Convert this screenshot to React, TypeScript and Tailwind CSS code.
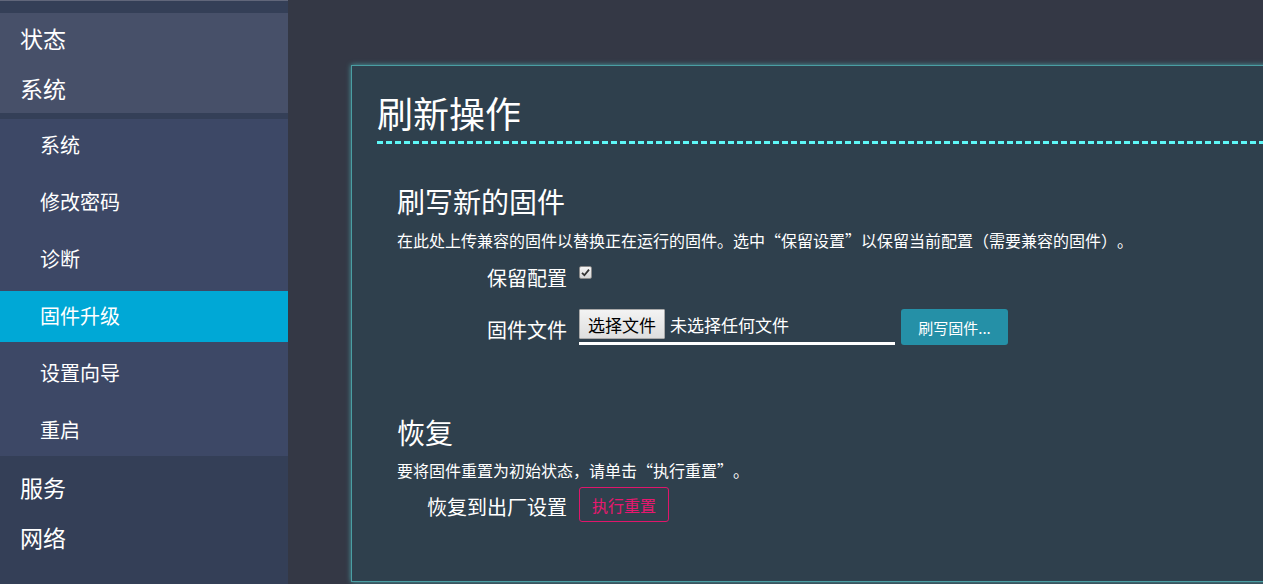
import React from "react";

const font = { fontFamily: '"Noto Sans CJK SC", "Noto Sans", sans-serif' };

function TopItem({ label }: { label: string }) {
  return (
    <div className="h-[50px] flex items-center pl-[20px] text-[23px] text-white leading-none">
      {label}
    </div>
  );
}

function SubItem({ label, active }: { label: string; active?: boolean }) {
  return (
    <div
      className={
        "h-[51px] flex items-center pl-[40px] text-[20px] text-white leading-none " +
        (active ? "bg-[#00a8d6]" : "")
      }
    >
      {label}
    </div>
  );
}

function CheckBox() {
  return (
    <div className="w-[13px] h-[13px] mt-[1px] rounded-[2px] border border-[#8a8a8a] bg-gradient-to-b from-[#f4f4f4] to-[#d8d8d8] flex items-center justify-center">
      <svg width="9" height="9" viewBox="0 0 9 9">
        <path d="M1 4.8 L3.4 7.2 L8 1.6" fill="none" stroke="#333" strokeWidth="1.8" />
      </svg>
    </div>
  );
}

/* full-width punctuation cells */
function Open({ c }: { c: string }) {
  return <span className="inline-block w-[16px] text-right">{c}</span>;
}
function Close({ c }: { c: string }) {
  return <span className="inline-block w-[16px] text-left">{c}</span>;
}

export default function App() {
  return (
    <div className="flex w-[1263px] h-[584px] overflow-hidden bg-[#343845]" style={font}>
      {/* Sidebar */}
      <div className="w-[288px] shrink-0 h-full bg-[#343f57] flex flex-col">
        <div className="h-px bg-[#60667a]" />
        <div className="h-[12px]" />
        <div className="bg-[#475069]">
          <TopItem label="状态" />
          <TopItem label="系统" />
        </div>
        <div className="h-[6px]" />
        <div className="bg-[#3d4866] flex flex-col gap-[6.2px]">
          <SubItem label="系统" />
          <SubItem label="修改密码" />
          <SubItem label="诊断" />
          <SubItem label="固件升级" active />
          <SubItem label="设置向导" />
          <SubItem label="重启" />
        </div>
        <div className="pt-[7px]">
          <TopItem label="服务" />
          <TopItem label="网络" />
        </div>
      </div>

      {/* Main */}
      <div className="flex-1 min-w-0 pl-[63px] pt-[65px]">
        <div className="w-[1000px] h-[517px] border border-[#4a9ea3] bg-[#2f404d] shadow-[0_0_5px_#4a9ea3]">
          <div className="pl-[25px] mt-[24px] h-[44px] flex items-center text-[36px] text-white leading-none">
            刷新操作
          </div>
          <div className="ml-[25px] mt-[7px] h-[3px] bg-[repeating-linear-gradient(90deg,#5ef6f6_0px,#5ef6f6_6px,transparent_6px,transparent_9px)]" />

          <div className="pl-[45px]">
            {/* Flash section */}
            <div className="mt-[39px] h-[36px] flex items-center text-[28px] text-white leading-none">
              刷写新的固件
            </div>
            <div className="mt-[10px] h-[22px] flex items-center text-[16px] text-white leading-none whitespace-pre">
              <span>
                在此处上传兼容的固件以替换正在运行的固件。选中<Open c="“" />保留设置<Close c="”" />以保留当前配置<Open c="（" />需要兼容的固件<Close c="）" />。
              </span>
            </div>

            <div className="mt-[14px] flex">
              <div className="w-[170px] h-[26px] flex items-center justify-end text-[20px] text-white leading-none">
                保留配置
              </div>
              <div className="ml-[12px]">
                <CheckBox />
              </div>
            </div>

            <div className="mt-[18px] flex items-start">
              <div className="w-[170px] mt-[8px] h-[26px] flex items-center justify-end text-[20px] text-white leading-none">
                固件文件
              </div>
              <div className="ml-[12px] w-[316px] h-[36px] border-b-[3px] border-white flex items-start">
                <div className="w-[86px] h-[30px] border border-[#a9a9a9] bg-gradient-to-b from-[#f3f3f3] to-[#dedede] flex items-center justify-center text-[17px] text-black leading-none rounded-[1px]">
                  选择文件
                </div>
                <div className="ml-[5px] h-[30px] flex items-center text-[17px] text-white leading-none">
                  未选择任何文件
                </div>
              </div>
              <div className="ml-[6px] w-[107px] h-[36px] rounded-[3px] bg-[#2590a7] flex items-center justify-center text-[15px] text-white leading-none">
                刷写固件...
              </div>
            </div>

            {/* Restore section */}
            <div className="mt-[69px] h-[36px] flex items-center text-[28px] text-white leading-none">
              恢复
            </div>
            <div className="mt-[9px] h-[22px] flex items-center text-[16px] text-white leading-none whitespace-pre">
              <span>
                要将固件重置为初始状态，请单击<Open c="“" />执行重置<Close c="”" />。
              </span>
            </div>
            <div className="mt-[6px] flex items-start">
              <div className="w-[170px] mt-[7px] h-[26px] flex items-center justify-end text-[20px] text-white leading-none">
                恢复到出厂设置
              </div>
              <div className="ml-[12px] w-[90px] h-[35px] border border-[#e0166b] rounded-[3px] flex items-center justify-center text-[16px] text-[#e8176f] leading-none">
                执行重置
              </div>
            </div>
          </div>
        </div>
      </div>
    </div>
  );
}
